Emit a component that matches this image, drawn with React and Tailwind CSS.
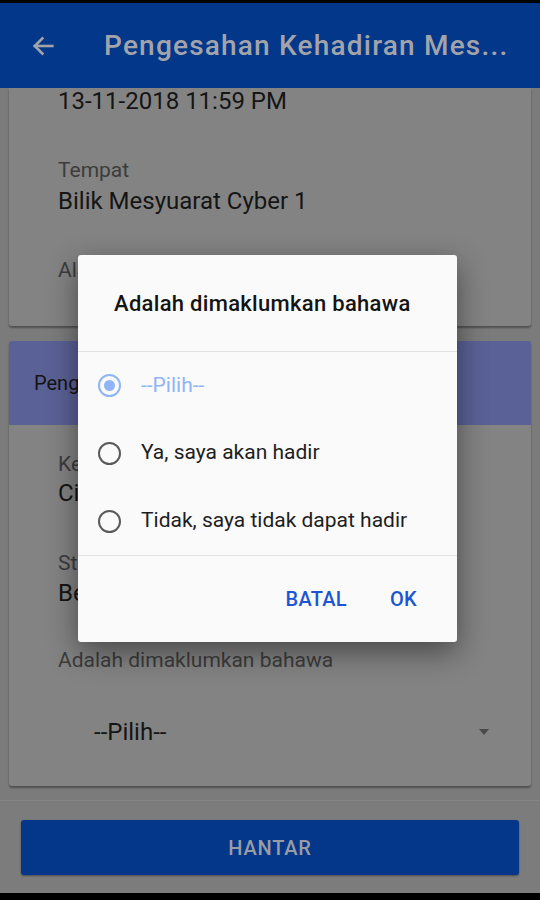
import React from "react";

function Radio({ selected }) {
  if (selected) {
    return (
      <div className="w-[23px] h-[23px] rounded-full border-[2.5px] border-[#8fb5f5] flex items-center justify-center">
        <div className="w-[11px] h-[11px] rounded-full bg-[#8fb5f5]" />
      </div>
    );
  }
  return <div className="w-[23px] h-[23px] rounded-full border-[2.5px] border-[#5a5a5a]" />;
}

export default function App() {
  const font = { fontFamily: "Roboto, 'Noto Sans', sans-serif" };
  return (
    <div className="relative w-[540px] h-[900px] overflow-hidden bg-black flex flex-col" style={font}>
      <div className="h-[3px] bg-black shrink-0" />
      {/* App bar */}
      <div className="h-[85px] shrink-0 bg-[#023789] flex items-center">
        <svg className="ml-[29px] w-[28px] h-[28px]" viewBox="0 0 24 24" fill="none" stroke="#a3a4aa" strokeWidth="2.2" strokeLinecap="square">
          <path d="M20 12H5" />
          <path d="M11.5 5.5 5 12l6.5 6.5" />
        </svg>
        <div className="ml-[47px] text-[28px] text-[#a3a4aa] font-medium tracking-[1.2px] whitespace-nowrap">
          Pengesahan Kehadiran Mes...
        </div>
      </div>
      {/* Content */}
      <div className="h-[712px] shrink-0 bg-[#7b7b7b] overflow-hidden px-[9px] flex flex-col">
        {/* Card 1 */}
        <div className="bg-[#838383] rounded-b-[3px] shadow-[0_2px_2px_rgba(0,0,0,0.35)] px-[49px] pb-[42px] flex flex-col">
          <div className="text-[24px] leading-[32px] -mt-[3px] text-[#151515]">13-11-2018 11:59 PM</div>
          <div className="mt-[39px] text-[21px] leading-[28px] text-[#3c3c3c]">Tempat</div>
          <div className="mt-[1px] text-[24px] leading-[32px] text-[#151515]">Bilik Mesyuarat Cyber 1</div>
          <div className="mt-[39px] text-[21px] leading-[28px] text-[#3c3c3c]">Alamat</div>
        </div>
        {/* Card 2 */}
        <div className="mt-[15px] bg-[#838383] rounded-[3px] shadow-[0_2px_2px_rgba(0,0,0,0.35)] flex flex-col">
          <div className="h-[84px] bg-[#5a6196] rounded-t-[3px] flex items-center px-[25px] text-[20px] text-[#141414]">
            Pengesahan Kehadiran
          </div>
          <div className="px-[49px] pt-[25px] flex flex-col">
            <div className="text-[21px] leading-[28px] text-[#3c3c3c]">Kepada</div>
            <div className="text-[24px] leading-[30px] text-[#151515]">Cik Siti Aminah</div>
            <div className="mt-[41px] text-[21px] leading-[28px] text-[#3c3c3c]">Status</div>
            <div className="mt-[1px] text-[24px] leading-[30px] text-[#151515]">Belum Disahkan</div>
            <div className="mt-[38px] text-[21px] leading-[28px] text-[#3c3c3c]">Adalah dimaklumkan bahawa</div>
            <div className="mt-[34px] h-[48px] -mr-[44px] flex items-center justify-between pl-[36px] pr-[36px]">
              <span className="text-[24px] text-[#151515]">--Pilih--</span>
              <svg width="12" height="8" viewBox="0 0 12 8">
                <path d="M1 1h10L6 7z" fill="#4a4a4a" />
              </svg>
            </div>
            <div className="h-[30px]" />
          </div>
        </div>
      </div>
      {/* Bottom bar */}
      <div className="h-[93px] shrink-0 bg-[#7c7c7c] border-t border-[#858585] px-[21px] pt-[19px]">
        <div className="h-[55px] w-[498px] rounded-[3px] bg-[#04378a] shadow-[0_1px_2px_rgba(0,0,0,0.4)] flex items-center justify-center text-[20px] font-medium text-[#9a9ca4] tracking-[0.8px]">
          HANTAR
        </div>
      </div>
      <div className="flex-1 bg-black" />

      {/* Dialog */}
      <div className="absolute left-[78px] top-[255px] w-[379px] h-[387px] bg-[#fafafa] rounded-[3px] shadow-[0_10px_30px_rgba(0,0,0,0.45)] flex flex-col">
        <div className="h-[96px] flex items-center pl-[36px] text-[22px] text-[#141414] font-medium tracking-[0.3px] whitespace-nowrap">
          Adalah dimaklumkan bahawa
        </div>
        <div className="h-px bg-[#e2e2e2]" />
        <div className="flex flex-col">
          <div className="h-[67px] flex items-center pl-[20px]">
            <Radio selected />
            <span className="ml-[20px] text-[21px] text-[#8fb5f5]">--Pilih--</span>
          </div>
          <div className="h-[68px] flex items-center pl-[20px]">
            <Radio />
            <span className="ml-[20px] text-[21px] text-[#1e1e1e]">Ya, saya akan hadir</span>
          </div>
          <div className="h-[68px] flex items-center pl-[20px]">
            <Radio />
            <span className="ml-[20px] text-[21px] text-[#1e1e1e] whitespace-nowrap">Tidak, saya tidak dapat hadir</span>
          </div>
        </div>
        <div className="h-px bg-[#e2e2e2]" />
        <div className="flex-1 flex items-center justify-end pr-[40px] gap-[43px] text-[20px] font-medium text-[#1c55d4] tracking-[0.3px]">
          <span>BATAL</span>
          <span>OK</span>
        </div>
      </div>
    </div>
  );
}
